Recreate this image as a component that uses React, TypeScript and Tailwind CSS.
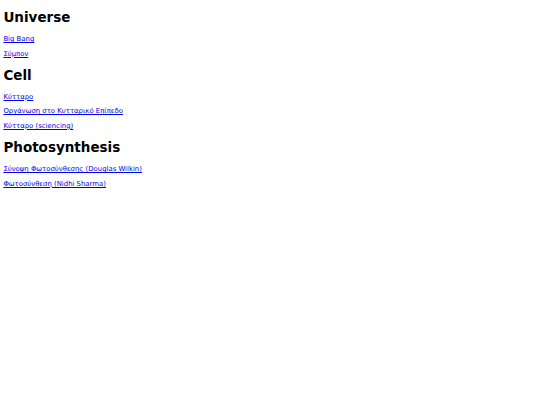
import React from "react";

type Section = {
  title: string;
  links: string[];
};

const SECTIONS: Section[] = [
  { title: "Universe", links: ["Big Bang", "Σύμπον"] },
  {
    title: "Cell",
    links: ["Κύτταρο", "Οργάνωση στο Κυτταρικό Επίπεδο", "Κύτταρο (sciencing)"],
  },
  {
    title: "Photosynthesis",
    links: ["Σύνοψη Φωτοσύνθεσης (Douglas Wilkin)", "Φωτοσύνθεση (Nidhi Sharma)"],
  },
];

const App: React.FC = () => {
  return (
    <div className="min-h-[405px] bg-white px-[3.4px] pt-[10px] font-['DejaVu_Sans',sans-serif] text-black">
      {SECTIONS.map((section) => (
        <div key={section.title}>
          <h1 className="mb-[9.5px] text-[13.5px] leading-[15.7px] font-bold">
            {section.title}
          </h1>
          {section.links.map((link) => (
            <p key={link} className="mb-[6.5px] text-[6.9px] leading-[8px]">
              <a href="#" className="text-[#0000ee] underline">
                {link}
              </a>
            </p>
          ))}
          <div className="h-[3.5px]" />
        </div>
      ))}
    </div>
  );
};

export default App;
